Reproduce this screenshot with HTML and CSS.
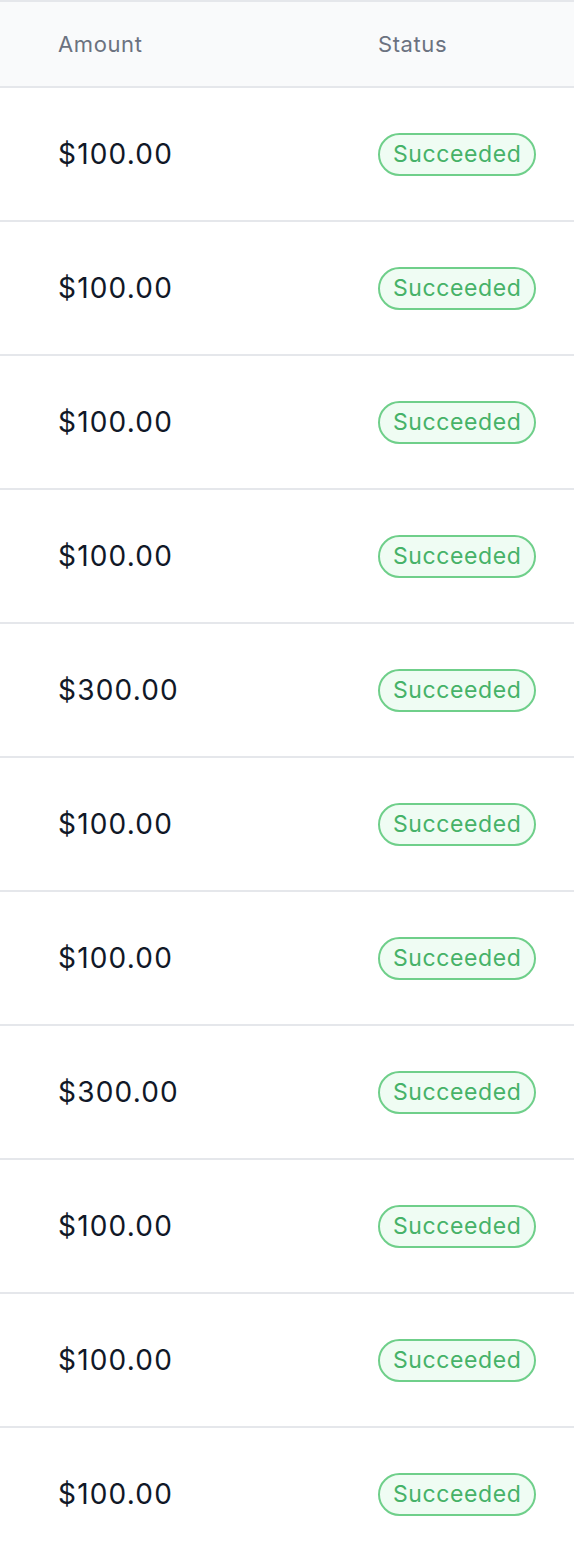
FILE: index.html
```html
<!DOCTYPE html>
<html lang="en">
<head>
    <meta charset="UTF-8">
    <meta name="viewport" content="width=device-width, initial-scale=1.0">
    <link rel="stylesheet" href="styles.css">
    <title>Payments</title>
</head>
<body>

    <div class="payments">
        <div class="row head">
            <div class="cell">Amount</div>
            <div class="cell">Status</div>
        </div>
        <div class="row">
            <div class="cell amount">$100.00</div>
            <div class="cell"><span class="badge">Succeeded</span></div>
        </div>
        <div class="row">
            <div class="cell amount">$100.00</div>
            <div class="cell"><span class="badge">Succeeded</span></div>
        </div>
        <div class="row">
            <div class="cell amount">$100.00</div>
            <div class="cell"><span class="badge">Succeeded</span></div>
        </div>
        <div class="row">
            <div class="cell amount">$100.00</div>
            <div class="cell"><span class="badge">Succeeded</span></div>
        </div>
        <div class="row">
            <div class="cell amount">$300.00</div>
            <div class="cell"><span class="badge">Succeeded</span></div>
        </div>
        <div class="row">
            <div class="cell amount">$100.00</div>
            <div class="cell"><span class="badge">Succeeded</span></div>
        </div>
        <div class="row">
            <div class="cell amount">$100.00</div>
            <div class="cell"><span class="badge">Succeeded</span></div>
        </div>
        <div class="row">
            <div class="cell amount">$300.00</div>
            <div class="cell"><span class="badge">Succeeded</span></div>
        </div>
        <div class="row">
            <div class="cell amount">$100.00</div>
            <div class="cell"><span class="badge">Succeeded</span></div>
        </div>
        <div class="row">
            <div class="cell amount">$100.00</div>
            <div class="cell"><span class="badge">Succeeded</span></div>
        </div>
        <div class="row">
            <div class="cell amount">$100.00</div>
            <div class="cell"><span class="badge">Succeeded</span></div>
        </div>
    </div>

</body>
</html>
```

FILE: styles.css
```css
body {
    font-family: 'Inter', 'Liberation Sans', sans-serif;
    background-color: #fff;
    margin: 0;
    padding: 0;
}

.payments {
    border-top: 2px solid #e5e7eb;
}

.row {
    display: grid;
    grid-template-columns: 320px 1fr;
    align-items: center;
    height: 132px;
    padding-left: 58px;
    border-bottom: 2px solid #e5e7eb;
}

.row.head {
    height: 84px;
    background-color: #f9fafb;
    color: #6b7280;
    font-size: 22px;
    letter-spacing: 0.6px;
}

.amount {
    font-size: 28px;
    letter-spacing: 1.2px;
    color: #111827;
}

.badge {
    display: inline-block;
    padding: 7px 13px;
    font-size: 23px;
    line-height: 25px;
    letter-spacing: 0.6px;
    color: #46b268;
    background-color: #effcf3;
    border: 2px solid #6fcf8a;
    border-radius: 22px;
}
```
